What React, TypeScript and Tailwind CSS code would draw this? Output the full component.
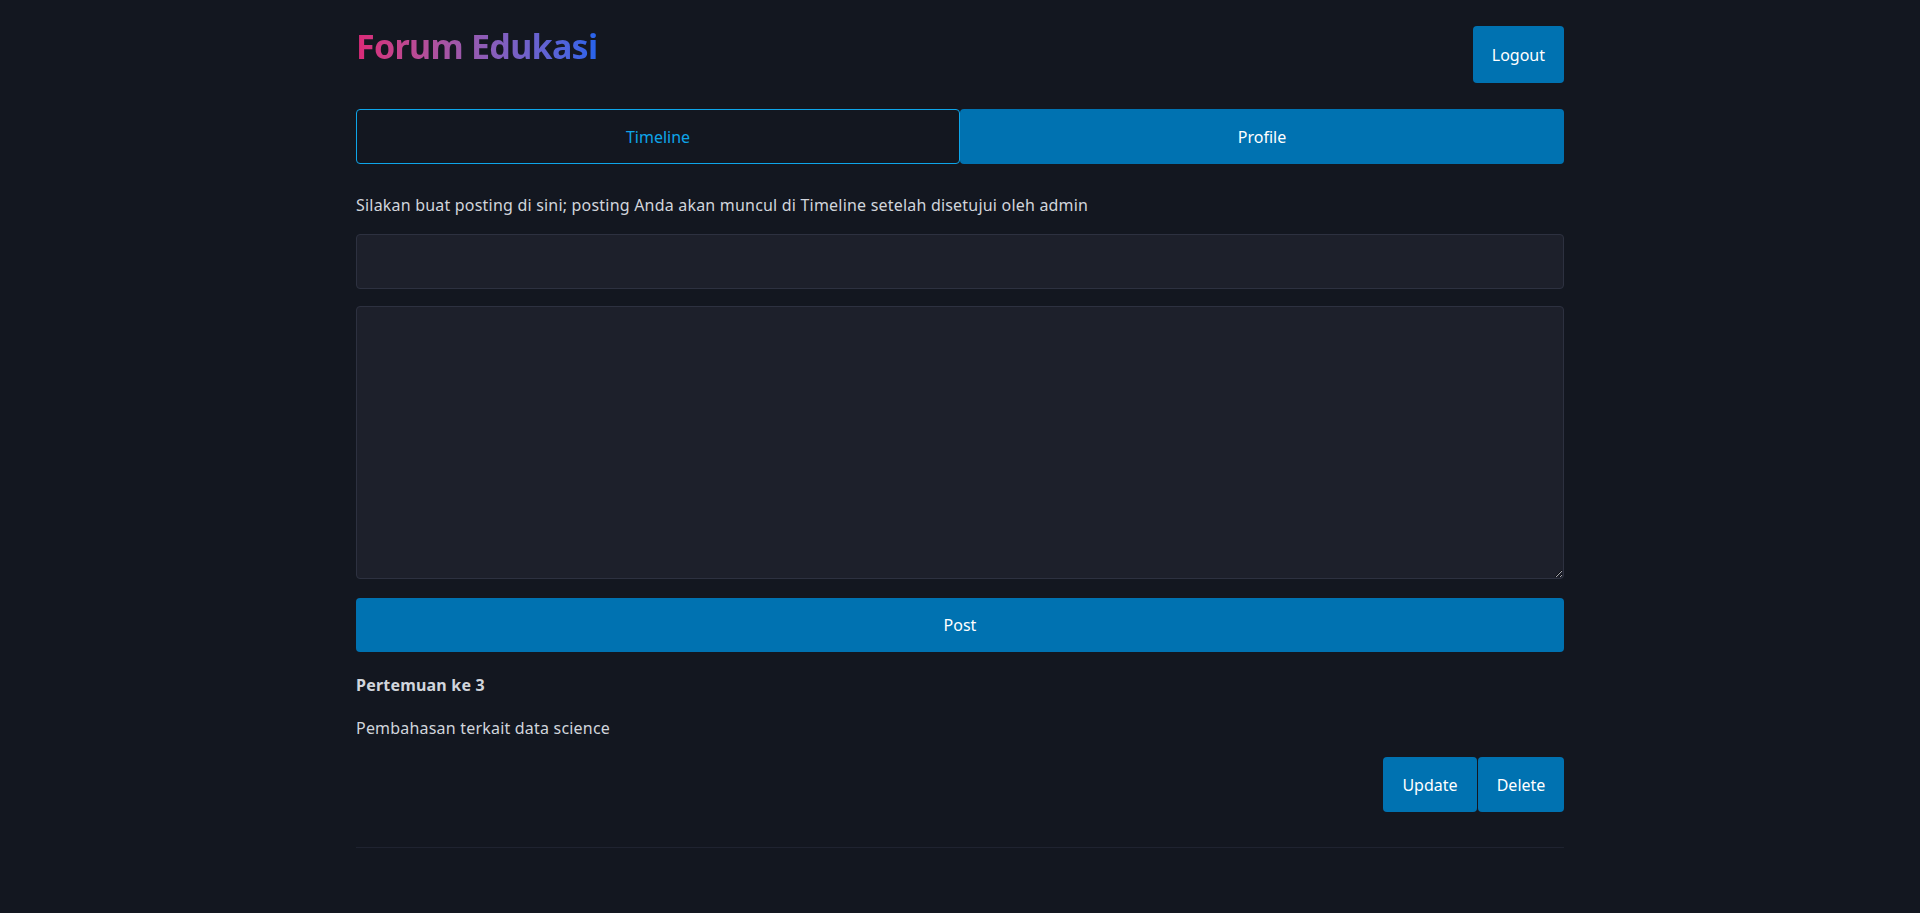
import React, { useState } from "react";

const font = { fontFamily: '"Segoe UI", "Noto Sans", "Open Sans", sans-serif' };

export default function App() {
  const [tab, setTab] = useState<"timeline" | "profile">("profile");
  const [title, setTitle] = useState("");
  const [body, setBody] = useState("");

  return (
    <div className="min-h-[913px] w-full bg-[#131720] text-gray-300" style={font}>
      <div className="mx-auto w-[1208px] pt-[26px] pb-16">
        {/* Header */}
        <div className="flex items-start justify-between">
          <h1 className="w-fit bg-gradient-to-r from-[#db2777] to-[#2563eb] bg-clip-text text-[34px] leading-10 font-bold tracking-[-0.7px] text-transparent">
            Forum Edukasi
          </h1>
          <button
            type="button"
            className="h-[57px] rounded bg-[#0072b1] px-[19px] text-base text-white"
          >
            Logout
          </button>
        </div>

        {/* Tabs */}
        <div className="mt-[26px] grid grid-cols-2">
          <button
            type="button"
            onClick={() => setTab("timeline")}
            className="h-[55px] rounded border border-[#0ea5e9] text-base text-[#0ea5e9]"
          >
            Timeline
          </button>
          <button
            type="button"
            onClick={() => setTab("profile")}
            className="h-[55px] rounded bg-[#0072b1] text-base text-white"
          >
            Profile
          </button>
        </div>

        <p className="mt-[29px] text-base leading-6 tracking-[0.2px] text-gray-300">
          Silakan buat posting di sini; posting Anda akan muncul di Timeline setelah disetujui oleh admin
        </p>

        {/* Form */}
        <input
          value={title}
          onChange={(e) => setTitle(e.target.value)}
          className="mt-[17px] block h-[55px] w-full rounded border border-[#2d3140] bg-[#1d202b] px-3 text-gray-200 outline-none"
        />
        <textarea
          value={body}
          onChange={(e) => setBody(e.target.value)}
          className="mt-[17px] block h-[273px] w-full rounded border border-[#2d3140] bg-[#1d202b] px-3 py-2 text-gray-200 outline-none"
        />
        <button
          type="button"
          className="mt-[19px] block h-[54px] w-full rounded bg-[#0072b1] text-base text-white"
        >
          Post
        </button>

        {/* Post item */}
        <div className="mt-[21px]">
          <div className="text-base leading-6 font-bold tracking-[0.2px] text-gray-300">Pertemuan ke 3</div>
          <p className="mt-[19px] text-base leading-6 tracking-[0.2px] text-gray-300">Pembahasan terkait data science</p>
          <div className="mt-[17px] flex justify-end gap-px">
            <button type="button" className="h-[55px] w-[94px] rounded bg-[#0072b1] text-base text-white">
              Update
            </button>
            <button type="button" className="h-[55px] w-[86px] rounded bg-[#0072b1] text-base text-white">
              Delete
            </button>
          </div>
          <div className="mt-[35px] border-t border-[#1f2330]" />
        </div>
        {tab === "timeline" ? null : null}
      </div>
    </div>
  );
}
